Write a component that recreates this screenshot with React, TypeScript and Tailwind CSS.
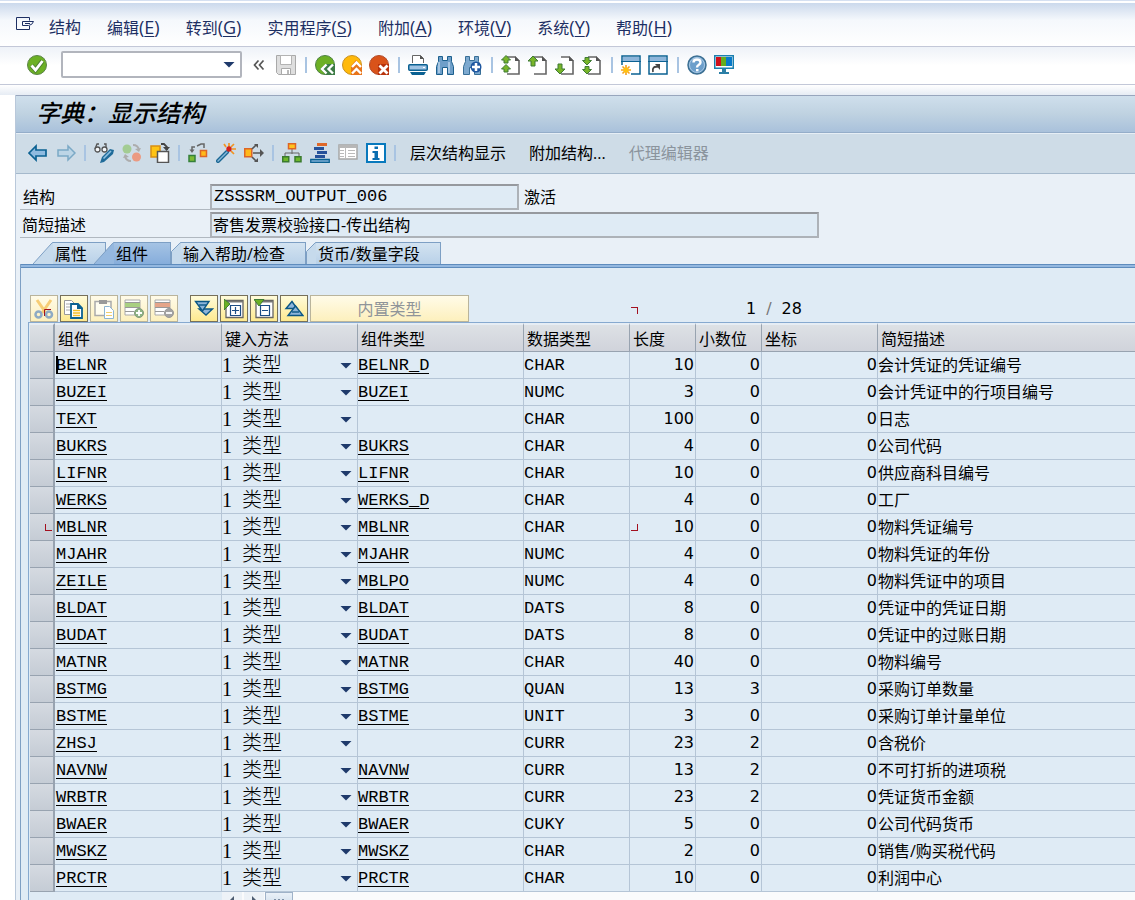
import { useState, type ReactNode } from "react";
import clsx from "clsx";

interface Field {
  name: string;
  type: string;
  dataType: string;
  length: number;
  decimals: number;
  text: string;
}

const FIELDS: Field[] = [
  { name: "BELNR", type: "BELNR_D", dataType: "CHAR", length: 10, decimals: 0, text: "会计凭证的凭证编号" },
  { name: "BUZEI", type: "BUZEI", dataType: "NUMC", length: 3, decimals: 0, text: "会计凭证中的行项目编号" },
  { name: "TEXT", type: "", dataType: "CHAR", length: 100, decimals: 0, text: "日志" },
  { name: "BUKRS", type: "BUKRS", dataType: "CHAR", length: 4, decimals: 0, text: "公司代码" },
  { name: "LIFNR", type: "LIFNR", dataType: "CHAR", length: 10, decimals: 0, text: "供应商科目编号" },
  { name: "WERKS", type: "WERKS_D", dataType: "CHAR", length: 4, decimals: 0, text: "工厂" },
  { name: "MBLNR", type: "MBLNR", dataType: "CHAR", length: 10, decimals: 0, text: "物料凭证编号" },
  { name: "MJAHR", type: "MJAHR", dataType: "NUMC", length: 4, decimals: 0, text: "物料凭证的年份" },
  { name: "ZEILE", type: "MBLPO", dataType: "NUMC", length: 4, decimals: 0, text: "物料凭证中的项目" },
  { name: "BLDAT", type: "BLDAT", dataType: "DATS", length: 8, decimals: 0, text: "凭证中的凭证日期" },
  { name: "BUDAT", type: "BUDAT", dataType: "DATS", length: 8, decimals: 0, text: "凭证中的过账日期" },
  { name: "MATNR", type: "MATNR", dataType: "CHAR", length: 40, decimals: 0, text: "物料编号" },
  { name: "BSTMG", type: "BSTMG", dataType: "QUAN", length: 13, decimals: 3, text: "采购订单数量" },
  { name: "BSTME", type: "BSTME", dataType: "UNIT", length: 3, decimals: 0, text: "采购订单计量单位" },
  { name: "ZHSJ", type: "", dataType: "CURR", length: 23, decimals: 2, text: "含税价" },
  { name: "NAVNW", type: "NAVNW", dataType: "CURR", length: 13, decimals: 2, text: "不可打折的进项税" },
  { name: "WRBTR", type: "WRBTR", dataType: "CURR", length: 23, decimals: 2, text: "凭证货币金额" },
  { name: "BWAER", type: "BWAER", dataType: "CUKY", length: 5, decimals: 0, text: "公司代码货币" },
  { name: "MWSKZ", type: "MWSKZ", dataType: "CHAR", length: 2, decimals: 0, text: "销售/购买税代码" },
  { name: "PRCTR", type: "PRCTR", dataType: "CHAR", length: 10, decimals: 0, text: "利润中心" },
];

const MENUS: [string, string][] = [
  ["结构", ""],
  ["编辑", "E"],
  ["转到", "G"],
  ["实用程序", "S"],
  ["附加", "A"],
  ["环境", "V"],
  ["系统", "Y"],
  ["帮助", "H"],
];

const COLUMNS = ["组件", "键入方法", "组件类型", "数据类型", "长度", "小数位", "坐标", "简短描述"];

const TABS = ["属性", "组件", "输入帮助/检查", "货币/数量字段"];

const MONO = "font-['Liberation_Mono','Noto_Sans_CJK_SC',monospace]";
const DIGITS = "font-['DejaVu_Sans','Noto_Sans_CJK_SC',sans-serif] font-normal";

const PAGE = "M6 2h8l4 4v13H6";
const UP = "M5 1l5 5H7v5H3V6H0z";
const DOWN = "M3 9h4v5h3l-5 5-5-5h3z";

const ICONS: Record<string, ReactNode> = {
  check: (
    <>
      <circle cx="10" cy="10" r="9.5" fill="#6cb024" stroke="#5b8447" />
      <path d="M4.5 10.5l4 4.5 7-9" fill="none" stroke="#4c7d33" strokeWidth="4.5" />
      <path d="M4.5 10.5l4 4.5 7-9" fill="none" stroke="#fff" strokeWidth="2.8" />
    </>
  ),
  collapse: <path d="M9.5 5.5l-4 4.5 4 4.5M14.5 5.5l-4 4.5 4 4.5" fill="none" stroke="#555" strokeWidth="1.7" />,
  save: (
    <>
      <path d="M.5.5h19v19H2.5l-2-2z" fill="#dedede" stroke="#a9a9a9" />
      <path d="M4.5.5h11v9h-11z" fill="#fff" stroke="#b3b3b3" />
      <path d="M5.5 13.5h9v6h-9z" fill="#fff" stroke="#a9a9a9" />
      <path d="M11 15h2v4h-2z" fill="#b9b9b9" />
    </>
  ),
  back: (
    <>
      <circle cx="10" cy="10" r="9.5" fill="#6cb024" stroke="#4d8143" />
      <path d="M11 9h9v11h-9l-6-6z" fill="#3d7b45" />
      <path d="M11.5 9.5L7 14l4.5 4.5M18 9.5L13.5 14l4.5 4.5" fill="none" stroke="#fff" strokeWidth="2.4" />
    </>
  ),
  exit: (
    <>
      <circle cx="10" cy="10" r="9.5" fill="#ffb90a" stroke="#c9901f" />
      <path d="M9 11l5-6 6 6v9H9z" fill="#e8741a" />
      <path d="M10 12l4.5-4.5L19 12M10 18.5l4.5-4.5 4.5 4.5" fill="none" stroke="#fff" strokeWidth="2.4" />
    </>
  ),
  cancel: (
    <>
      <circle cx="10" cy="10" r="9.5" fill="#d9531a" stroke="#b24a28" />
      <path d="M9 9h11v11H9z" fill="#b8330c" />
      <path d="M10.5 10.5l8 8M18.5 10.5l-8 8" stroke="#fff" strokeWidth="2.8" />
    </>
  ),
  print: (
    <>
      <path d="M4.5 8V.5h8l3 3V8" fill="#fff" stroke="#666" />
      <path d="M12 0v4h4z" fill="#555" />
      <rect x=".75" y="9.75" width="18.5" height="5.5" rx="1" fill="#9fc3e3" stroke="#0b6192" strokeWidth="1.5" />
      <path d="M15 12h2v1h-2z" fill="#fff" />
      <path d="M2 17h16l-2 3H4z" fill="#0b6192" />
    </>
  ),
  find: (
    <>
      <path d="M3.5 1.5h4v4h5v-4h4v5l2 5v8h-6v-7h-5v7h-6v-8l2-5z" fill="#6f9fc9" stroke="#1c608e" />
      <path d="M4 7v11M14 7v11" stroke="#bad5ec" strokeWidth="1.5" />
    </>
  ),
  findNext: (
    <>
      <path d="M3.5 1.5h4v4h5v-4h4v5l2 5v8h-6v-7h-5v7h-6v-8l2-5z" fill="#7da9cf" stroke="#386f97" />
      <circle cx="14" cy="12" r="5.5" fill="#1f57a0" />
      <path d="M14 8v8M10 12h8" stroke="#fff" strokeWidth="2.5" />
    </>
  ),
  first: (
    <>
      <path d={PAGE} fill="#fff" stroke="#666" strokeWidth="1.6" />
      <path d="M14 1v5h5z" fill="#555" />
      <path d="M5 .5l4.5 4.5H7v3H3V5H.5zM5 9.500l4.500 4.500H7v3H3v-3H.5z" fill="#78b529" stroke="#3f7b35" />
    </>
  ),
  prev: (
    <>
      <path d={PAGE} fill="#fff" stroke="#666" strokeWidth="1.6" />
      <path d="M14 1v5h5z" fill="#555" />
      <path d={UP} fill="#78b529" stroke="#3f7b35" />
    </>
  ),
  next: (
    <>
      <path d={PAGE} fill="#fff" stroke="#666" strokeWidth="1.6" />
      <path d="M14 1v5h5z" fill="#555" />
      <path d={DOWN} fill="#78b529" stroke="#3f7b35" />
    </>
  ),
  last: (
    <>
      <path d={PAGE} fill="#fff" stroke="#666" strokeWidth="1.6" />
      <path d="M14 1v5h5z" fill="#555" />
      <path d="M3 2.5h4v3h2.5L5 10 .5 5.5H3zM3 11.5h4v3h2.5L5 19 .5 14.5H3z" fill="#78b529" stroke="#3f7b35" />
    </>
  ),
  session: (
    <>
      <path d="M1 1h18v18H1z" fill="#fff" stroke="#0b6192" strokeWidth="1.5" />
      <path d="M2 2h16v4H2z" fill="#8db5da" />
      <path d="M0 6.5h20" stroke="#0b6192" />
      <path d="M0 10h10v10H0z" fill="#fff" />
      <path d="M5 10v10M0 15h10M1.5 11.5l7 7M8.5 11.5l-7 7" stroke="#f6a21c" strokeWidth="1.6" />
      <circle cx="5" cy="15" r="2.6" fill="#ffc20e" />
    </>
  ),
  shortcut: (
    <>
      <path d="M1 1h18v18H1z" fill="#fff" stroke="#0b6192" strokeWidth="1.5" />
      <path d="M2 2h16v4H2z" fill="#8db5da" />
      <path d="M0 6.5h20" stroke="#0b6192" />
      <path d="M5 17c-1-4 1-6 5-5" fill="none" stroke="#444" strokeWidth="1.8" />
      <path d="M7 9h5v6z" fill="#444" />
    </>
  ),
  help: (
    <>
      <circle cx="10" cy="10" r="9" fill="#6d9fcb" stroke="#3d7093" strokeWidth="1.5" />
      <circle cx="10" cy="10" r="7.5" fill="none" stroke="#a8c8e4" />
      <path d="M6.5 7.5C6.5 3.5 13.5 3.5 13.5 7.5 13.5 10 10 9.5 10 12.5" fill="none" stroke="#fff" strokeWidth="2.4" />
      <path d="M9 14h2.5v2.3H9z" fill="#fff" />
    </>
  ),
  monitor: (
    <>
      <path d="M.75.75h18.5v12.5H.75z" fill="#fff" stroke="#1b7fae" strokeWidth="1.5" />
      <path d="M2 2h6v9H2z" fill="#d00f1b" />
      <path d="M7 2h6v9H7z" fill="#65ac1e" />
      <path d="M12 2h6v9h-6z" fill="#0879c9" />
      <path d="M8 14h4v3h3v2H5v-2h3z" fill="#2b7fa6" />
    </>
  ),
  left: <path d="M1 10l7-7v4h10v6H8v4z" fill="#8fbbe0" stroke="#0b6192" strokeWidth="1.7" />,
  right: <path d="M19 10l-7-7v4H2v6h10v4z" fill="#bcd5e6" stroke="#7ba9c6" strokeWidth="1.5" />,
  toggle: (
    <>
      <path d="M1 6l2-5h2M8 6h2M12 5V1h-2" fill="none" stroke="#555" strokeWidth="1.3" />
      <circle cx="3.5" cy="6.5" r="2.5" fill="#f4f7fa" stroke="#555" strokeWidth="1.3" />
      <circle cx="10.5" cy="6.5" r="2.5" fill="#f4f7fa" stroke="#555" strokeWidth="1.3" />
      <path d="M6 20l2-6 8-8 4 1-1 4-9 8z" fill="#1f6b99" />
      <path d="M9.5 15.5L17 8" stroke="#8fc0e2" strokeWidth="1.6" />
    </>
  ),
  activate: (
    <>
      <circle cx="5" cy="6" r="4.5" fill="#a3cc93" />
      <circle cx="14.5" cy="14" r="4.5" fill="#eb9a82" />
      <path d="M11 2q5 0 6 5M9 18q-5 0-6-5" fill="none" stroke="#adadad" strokeWidth="2" />
      <path d="M19 5l-2 4-4-3zM1 15l2-4 4 3z" fill="#adadad" />
    </>
  ),
  copyTo: (
    <>
      <path d="M1 3h9v11H1z" fill="#ffc414" stroke="#d98f13" strokeWidth="1.5" />
      <path d="M7.5 8.5h11v11h-11z" fill="#fff" stroke="#555" strokeWidth="1.5" />
      <path d="M11 1h3l3 3v3" fill="none" stroke="#444" strokeWidth="1.8" />
      <path d="M13 4h7l-3.5 4z" fill="#444" />
    </>
  ),
  hierarchy: (
    <>
      <path d="M1 12.5h6v6H1z" fill="#7dbb34" stroke="#34803a" strokeWidth="1.5" />
      <path d="M12.5 7.5h6v6h-6z" fill="#ffb91a" stroke="#dd6526" strokeWidth="1.5" />
      <path d="M4 8V4h3M9 3l4-2h3v4" fill="none" stroke="#666" strokeWidth="1.5" />
      <path d="M1.5 6.5h5L4 10z" fill="#666" />
    </>
  ),
  wand: (
    <>
      <path d="M2 18l9-9" stroke="#1a6793" strokeWidth="4" strokeLinecap="round" />
      <path d="M2 18l9-9" stroke="#86b7da" strokeWidth="1.5" strokeLinecap="round" />
      <path d="M8 1l2 3M13 0v4M18 1l-3 3M16 6h4M15 8l3 3" stroke="#f19422" strokeWidth="1.7" />
      <circle cx="13" cy="6" r="2.7" fill="#d4201b" />
    </>
  ),
  spread: (
    <>
      <path d="M.75 5.75h7v8h-7z" fill="#ffb91a" stroke="#dd6526" strokeWidth="1.5" />
      <path d="M9 10h8M8 6l4-4M8 14l4 4" stroke="#555" strokeWidth="1.6" />
      <path d="M16 6l4 4-4 4zM10 1h4v4zM10 19h4v-4z" fill="#555" />
    </>
  ),
  tree: (
    <>
      <path d="M10 6v5M3 14v-4h14v4" fill="none" stroke="#666" />
      <path d="M6.5.75h7v5h-7z" fill="#ffc21e" stroke="#dd6526" strokeWidth="1.5" />
      <path d="M.75 13.75h6v5h-6zM13 13.75h6v5h-6z" fill="#6db72b" stroke="#3b7b2f" strokeWidth="1.5" />
    </>
  ),
  stack: (
    <>
      <path d="M7 0h10v3H7z" fill="#df682a" />
      <path d="M4 4h10v3H4zM7 8h10v3H7zM5 12h10v3H5z" fill="#26529a" />
      <path d="M.75 16.5h18.5v3H.75z" fill="#7daed5" stroke="#0b6192" strokeWidth="1.3" />
    </>
  ),
  list: (
    <>
      <path d="M1 2h18v14H1z" fill="#fff" stroke="#a6a6a6" strokeWidth="1.5" />
      <path d="M1 2h18v3H1z" fill="#b7b7b7" />
      <path d="M7.5 4v12M2 7.5h4M2 10.5h4M2 13.5h4M10 7.5h7M10 10.5h7M10 13.5h7" stroke="#bbb" />
    </>
  ),
  info: (
    <>
      <path d="M1 1h18v18H1z" fill="#fff" stroke="#0879bd" strokeWidth="2" />
      <path d="M8.5 3.5H12V6H8.5zM6.5 8H12v7h1.500v2h-7v-2h2v-5h-2z" fill="#0b6eb0" />
    </>
  ),
  cut: (
    <>
      <path d="M3 1l9 13M17 1L8 14" stroke="#f7cd75" strokeWidth="3" />
      <circle cx="4.5" cy="15.5" r="3" fill="none" stroke="#8eabc4" strokeWidth="2.5" />
      <circle cx="15" cy="15.5" r="3" fill="none" stroke="#8eabc4" strokeWidth="2.5" />
      <path d="M10.5 17v-6.5H17" fill="none" stroke="#a3101f" />
    </>
  ),
  copy: (
    <>
      <path d="M.5 1.5h7l4 4v10H.5z" fill="#fff" stroke="#999" />
      <path d="M2 5h4M2 8h4M2 11h4" stroke="#aaa" />
      <path d="M7 5h7l4 4v10H7z" fill="#fff" stroke="#0b6192" strokeWidth="1.8" />
      <path d="M13 4v6h6z" fill="#0b6192" />
      <path d="M9 11.5h7M9 14h7M9 16.5h7" stroke="#f4bf28" strokeWidth="1.5" />
    </>
  ),
  paste: (
    <>
      <path d="M1 2.5h16v14H1z" fill="#fffdf0" stroke="#aaa" strokeWidth="1.5" />
      <path d="M5 1h8v4H5z" fill="#999" />
      <path d="M10.5 7.5h5l4 4v8h-9z" fill="#fff" stroke="#8cb4d2" />
      <path d="M12 13.5h6M12 16.5h6" stroke="#f0cf6e" />
    </>
  ),
  insertRow: (
    <>
      <path d="M1 1h15v15H1z" fill="#fff" stroke="#aaa" />
      <path d="M1 4h15v4H1z" fill="#a9cf82" />
      <path d="M1 3.5h15M1 8.5h15M1 12.5h9" stroke="#999" />
      <circle cx="15" cy="14" r="4.5" fill="#8cb383" stroke="#849a7e" />
      <path d="M15 11v6M12 14h6" stroke="#fff" strokeWidth="1.8" />
    </>
  ),
  deleteRow: (
    <>
      <path d="M1 1h15v15H1z" fill="#fff" stroke="#aaa" />
      <path d="M1 4h15v4H1z" fill="#e5a58a" />
      <path d="M1 3.5h15M1 8.5h15M1 12.5h9" stroke="#999" />
      <circle cx="15" cy="14" r="4.5" fill="#a3a3a3" stroke="#999" />
      <path d="M12 14h6" stroke="#fff" strokeWidth="1.8" />
    </>
  ),
  expandAll: (
    <>
      <path d="M5 10h13.500l-6.500 6z" fill="#8db5da" stroke="#0b5785" strokeWidth="1.400" />
      <path d="M1.500 2.500H15L8.500 12z" fill="#8db5da" stroke="#0b5785" strokeWidth="1.400" />
      <path d="M5 6h7" stroke="#0b5785" strokeWidth="1.400" />
    </>
  ),
  collapseAll: (
    <>
      <path d="M2 9.500h11L8 2.500z" fill="#8db5da" stroke="#0b5785" strokeWidth="1.400" />
      <path d="M4 16.500h15L11.500 7z" fill="#8db5da" stroke="#0b5785" strokeWidth="1.400" />
      <path d="M8 13h7" stroke="#0b5785" strokeWidth="1.400" />
    </>
  ),
  expand: (
    <>
      <path d="M2 1.5h17v17H2z" fill="#fff" stroke="#666" strokeWidth="1.3" />
      <path d="M2 2h17v1.5H2z" fill="#777" />
      <path d="M6.5 6.5h10v10h-10zM11.5 8v7M8 11.5h7" fill="none" stroke="#1c4d86" strokeWidth="1.2" />
      <path d="M0 0l6 5-6 6z" fill="#6cb024" stroke="#3f7b35" />
    </>
  ),
  shrink: (
    <>
      <path d="M2 1.5h17v17H2z" fill="#fff" stroke="#666" strokeWidth="1.3" />
      <path d="M2 2h17v1.5H2z" fill="#777" />
      <path d="M6.5 6.5h9v10h-9zM8 11.5h6" fill="none" stroke="#1c4d86" strokeWidth="1.2" />
      <path d="M0 .5h10L5 7z" fill="#6cb024" stroke="#3f7b35" />
    </>
  ),
};

const Icon = ({ name }: { name: string }) => (
  <svg viewBox="0 0 20 20" className="size-5 shrink-0" aria-hidden="true">
    {ICONS[name]}
  </svg>
);

const IconButtons = ({ names }: { names: string[] }) => (
  <>
    {names.map((name, i) =>
      name === "|" ? (
        <span key={i} className="h-4 w-[2px] shrink-0 bg-[#a9c4e2]" />
      ) : (
        <button key={i} type="button" aria-label={name} className="shrink-0">
          <Icon name={name} />
        </button>
      )
    )}
  </>
);

const Arrow = () => (
  <svg viewBox="0 0 12 7" className="pointer-events-none h-[7px] w-3 shrink-0">
    <path d="M.5 1h11L8 4.5 6 6.500 4 4.500z" fill="#1f3a6b" />
  </svg>
);

// Corner brackets around the marked block
const Corner = ({ d }: { d: string }) => (
  <svg viewBox="0 0 7 7" className="size-[7px] shrink-0" shapeRendering="crispEdges">
    <path d={d} fill="none" stroke="#a3101f" />
  </svg>
);

const TableButton = ({ name, disabled }: { name: string; disabled?: boolean }) => (
  <button
    type="button"
    aria-label={name}
    disabled={disabled}
    className={clsx(
      "flex h-[27px] w-7 items-center justify-center border bg-linear-to-b",
      disabled
        ? "border-[#b9b49c] from-[#fffbe8] to-[#fdf0bd]"
        : "border-[#76705b] from-[#fffbd9] to-[#fde98e]"
    )}
  >
    <Icon name={name} />
  </button>
);

const Tab = ({
  label,
  active,
  wide,
  onClick,
}: {
  label: string;
  active: boolean;
  wide: boolean;
  onClick: () => void;
}) => (
  <button
    type="button"
    role="tab"
    aria-selected={active}
    onClick={onClick}
    className={clsx("flex h-[22px] items-stretch", active && "relative -ml-3")}
  >
    <svg
      viewBox={wide ? "0 0 10 22" : "0 0 20 22"}
      className={clsx("h-[22px] shrink-0", wide ? "w-[10px]" : "w-5")}
    >
      <path
        d={wide ? "M.5 22V9.5L8 2Q9 .5 10 .5V22z" : "M0 22L18 2Q19 .5 20 .5V22z"}
        fill={active ? "#95b8df" : "#c6daec"}
      />
      <path
        d={wide ? "M.5 22V9.5L8 2Q9 .5 10 .5" : "M0 22L18 2Q19 .5 20 .5"}
        fill="none"
        stroke="#7d9fc4"
      />
    </svg>
    <span
      className={clsx(
        "border-t border-r border-[#7d9fc4] bg-linear-to-b pl-[2px] leading-[22px]",
        active ? "from-[#a5c3e4] to-[#86addb] pr-[22px]" : "from-[#d3e3f1] to-[#b9d1e8]",
        !active && (wide ? "pr-5" : "pr-[18px]")
      )}
    >
      {label}
    </span>
  </button>
);

export default function App() {
  const [tab, setTab] = useState("组件");
  const [command, setCommand] = useState("");

  return (
    <div className="flex h-screen flex-col overflow-hidden bg-white font-['Open_Sans','Noto_Sans_CJK_SC',sans-serif] text-base leading-5 font-normal text-black">
      <header className="shrink-0 border-t border-[#d5e0f1] pt-[2px]">
        <nav className="flex h-11 items-center border-b border-[#c3c8d8] bg-linear-to-b from-[#cbd9ec] via-[#f5f8fc] via-40% to-white pt-[6px] pl-4 whitespace-nowrap text-[#1d2f63]">
          <svg viewBox="0 0 18 14" className="mr-[15px] mb-2 h-[14px] w-[18px] shrink-0">
            <path
              d="M13.5 3.500V.5H.5v12h13V9M6.500 4.500h11q-1 3.500-5 4h-6zM9 6.500h5"
              fill="none"
              stroke="#1d2f63"
            />
          </svg>
          <div className="flex gap-[26px]">
            {MENUS.map(([label, key]) => (
              <a key={label} href="#">
                {label}
                {key && (
                  <span className="text-lg leading-5">
                    (<u className="underline-offset-2">{key}</u>)
                  </span>
                )}
              </a>
            ))}
          </div>
        </nav>
      </header>

      <div className="flex h-[38px] shrink-0 items-center gap-[7px] border-b border-[#c3c8d8] bg-linear-to-b from-[#eef2f8] to-white to-50% pb-[2px] pl-[27px]">
        <button type="button" aria-label="Enter">
          <Icon name="check" />
        </button>
        <div className="ml-[7px] flex h-[27px] w-[181px] items-center rounded-xs border-2 border-[#b2b5bd] bg-white pr-[5px]">
          <input
            aria-label="Command"
            value={command}
            onChange={(e) => setCommand(e.target.value)}
            className="min-w-0 flex-1 px-1 outline-none"
          />
          <Arrow />
        </div>
        {[
          ["collapse", "save"],
          ["back", "exit", "cancel"],
          ["print", "find", "findNext"],
          ["first", "prev", "next", "last"],
          ["session", "shortcut"],
          ["help", "monitor"],
        ].map((group, i) => (
          <div key={i} className="flex items-center gap-[7px]">
            {i > 0 && <span className="mx-px h-4 w-[3px] border-r-2 border-[#a9c4e2]" />}
            <IconButtons names={group} />
          </div>
        ))}
      </div>

      <div className="h-[10px] shrink-0 bg-linear-to-b from-white to-[#e6ecf4]" />

      <main className="ml-[15px] flex min-h-0 flex-1 flex-col border-l border-[#b9c8da] bg-[#e9f0f7]">
        <h1 className="flex h-[38px] shrink-0 items-center border-t border-b border-t-[#98a6bd] border-b-[#94adc9] bg-linear-to-b from-[#cfdfec] via-[#bfd2e1] to-[#a9c1db] pb-[2px] pl-5 text-2xl font-medium italic">
          字典：显示结构
        </h1>
        <div className="flex h-[41px] shrink-0 items-center gap-2 border-t border-b border-t-[#e6eef5] border-b-[#a5b9cc] bg-[#cedce7] pb-[2px] pl-3 whitespace-nowrap">
          <IconButtons
            names={[
              "left", "right", "|",
              "toggle", "activate", "copyTo", "|",
              "hierarchy", "wand", "spread", "|",
              "tree", "stack", "list", "info", "|",
            ]}
          />
          <div className="ml-[6px] flex gap-[23px]">
            <button type="button">层次结构显示</button>
            <button type="button">附加结构...</button>
            <button type="button" disabled className="text-[#8b949d]">
              代理编辑器
            </button>
          </div>
        </div>

        <section className="flex shrink-0 flex-col gap-[2px] pt-[10px] pl-1">
          <div className="flex h-[26px]">
            <label htmlFor="structure" className="w-[190px] border-b border-[#b0b8c0] pt-[3px] pl-[3px]">
              结构
            </label>
            <input
              id="structure"
              readOnly
              value="ZSSSRM_OUTPUT_006"
              className={`w-[309px] border-2 border-[#adb2b8] border-t-[#96999e] bg-[#dfebf5] pl-[2px] text-[17px] outline-none ${MONO}`}
            />
            <span className="pt-[3px] pl-[5px]">激活</span>
          </div>
          <div className="flex h-[26px]">
            <label htmlFor="description" className="w-[190px] border-b border-[#b0b8c0] pt-[3px] pl-[2px]">
              简短描述
            </label>
            <input
              id="description"
              readOnly
              value="寄售发票校验接口-传出结构"
              className="w-[609px] border-2 border-[#adb2b8] border-t-[#96999e] bg-[#dfebf5] pl-px outline-none"
            />
          </div>
        </section>

        <div role="tablist" className="mt-1 flex shrink-0 pl-[17px] whitespace-nowrap">
          {TABS.map((label, i) => (
            <Tab
              key={label}
              label={label}
              active={tab === label}
              wide={i > 1}
              onClick={() => setTab(label)}
            />
          ))}
        </div>

        <section className="ml-1 flex min-h-0 flex-1 flex-col border-l border-[#7d9fc4] bg-[#dfebf5]">
          <div className="h-1 shrink-0 border-t border-b border-[#5f8cbd] bg-[#94b8e0]" />
          <div className="flex shrink-0 items-center gap-[2px] pt-[27px] pl-[9px]">
            <TableButton name="cut" disabled />
            <TableButton name="copy" />
            <TableButton name="paste" disabled />
            <TableButton name="insertRow" disabled />
            <TableButton name="deleteRow" disabled />
            <span className="w-2" />
            <TableButton name="expandAll" />
            <TableButton name="expand" />
            <TableButton name="shrink" />
            <TableButton name="collapseAll" />
            <button
              type="button"
              disabled
              className="h-[27px] w-[159px] border border-[#b9b49c] bg-linear-to-b from-[#fffbe8] to-[#fdf0bd] text-[#8f9499]"
            >
              内置类型
            </button>
            <span className="ml-40 pt-1">
              <Corner d="M0 .5h6.5V7" />
            </span>
            <span className={`ml-[106px] flex gap-[10px] ${DIGITS}`}>
              <span>1</span>
              <span className="text-[#777]">/</span>
              <span>28</span>
            </span>
          </div>

          <div className="ml-[7px] min-h-0 flex-1 border-t border-l border-[#86a9cf] pl-px">
            <table className="w-full table-fixed border-separate border-spacing-0">
              <colgroup>
                <col className="w-[25px]" />
                <col className="w-[167px]" />
                <col className="w-[136px]" />
                <col className="w-[166px]" />
                <col className="w-[106px]" />
                <col className="w-[66px]" />
                <col className="w-[66px]" />
                <col className="w-[116px]" />
                <col />
              </colgroup>
              <thead>
                <tr>
                  <th className="h-[29px] border-t-2 border-r-2 border-b border-t-[#e6edf4] border-r-[#98a3b0] border-b-[#98a3b0] bg-linear-to-b from-[#dde1e5] to-[#cdd2d9]" />
                  {COLUMNS.map((label) => (
                    <th
                      key={label}
                      className="border-t-2 border-r border-b border-t-[#e6edf4] border-r-[#98a3b0] border-b-[#98a3b0] bg-linear-to-b from-[#dde1e5] to-[#d0d3db] pt-px pl-[3px] text-left font-normal last:border-r-0"
                    >
                      {label}
                    </th>
                  ))}
                </tr>
              </thead>
              <tbody
                className={`text-[17px] [&_td]:h-[27px] [&_td]:border-r [&_td]:border-b [&_td]:border-[#b5c5d6] [&_td]:p-0 [&_td:last-child]:border-r-0 ${MONO}`}
              >
                {FIELDS.map((field, i) => (
                  <tr key={field.name}>
                    <td className="border-r-2! border-[#98a3b0]! bg-linear-to-b from-[#d5dae1] to-[#c5ccd5]">
                      <div className="flex justify-end pr-px">
                        {field.name === "MBLNR" && <Corner d="M.5 0v6.5H7" />}
                      </div>
                    </td>
                    <td className="relative align-top">
                      {i === 0 && <span className="absolute top-1 left-px h-[17px] w-[2px] bg-black" />}
                      <a href="#" className="mt-1 ml-px block h-[18px] w-fit border-b border-black">
                        {field.name}
                      </a>
                    </td>
                    <td>
                      <div className="flex items-center pr-[5px]">
                        <select
                          aria-label={`${field.name} 键入方法`}
                          className="h-[26px] min-w-0 flex-1 appearance-none font-['Liberation_Serif','Noto_Sans_CJK_SC',serif] text-[20px] leading-[26px] font-light outline-none"
                        >
                          <option>{"1\u00a0\u00a0类型"}</option>
                        </select>
                        <Arrow />
                      </div>
                    </td>
                    <td className="align-top">
                      {field.type && (
                        <a href="#" className="mt-1 block h-[18px] w-fit border-b border-black">
                          {field.type}
                        </a>
                      )}
                    </td>
                    <td className="align-top">
                      <span className="mt-1 block">{field.dataType}</span>
                    </td>
                    <td className={`text-base ${DIGITS}`}>
                      <div className="flex items-center justify-between px-px">
                        <span className="flex">{field.name === "MBLNR" && <Corner d="M0 6.5h6.5V0" />}</span>
                        {field.length}
                      </div>
                    </td>
                    <td className={`text-right text-base ${DIGITS}`}>
                      <span className="pr-px">{field.decimals}</span>
                    </td>
                    <td className={`text-right text-base ${DIGITS}`}>0</td>
                    <td className="font-['Open_Sans','Noto_Sans_CJK_SC',sans-serif] text-base">
                      {field.text}
                    </td>
                  </tr>
                ))}
              </tbody>
            </table>
            <div className="ml-[192px] flex h-4 bg-[#fafbfc]">
              <button type="button" aria-label="Scroll left" className="flex w-5 justify-center bg-[#edf2f7]">
                <svg viewBox="0 0 8 12" className="mt-1 h-3 w-2">
                  <path d="M6 0v12L0 6z" fill="#4d5c70" />
                </svg>
              </button>
              <button type="button" aria-label="Scroll right" className="ml-[2px] flex w-5 justify-center bg-[#edf2f7]">
                <svg viewBox="0 0 8 12" className="mt-1 h-3 w-2">
                  <path d="M2 0v12l6-6z" fill="#4d5c70" />
                </svg>
              </button>
              <span className="ml-px flex w-7 justify-center border border-[#9fb2c8] bg-linear-to-b from-[#eaf1f8] to-[#cddbea]">
                <svg viewBox="0 0 10 8" className="h-2 w-[10px]">
                  <path d="M0 6.5h2M4 6.5h2M8 6.5h2" stroke="#7e90a6" />
                </svg>
              </span>
            </div>
          </div>
        </section>
      </main>
    </div>
  );
}
